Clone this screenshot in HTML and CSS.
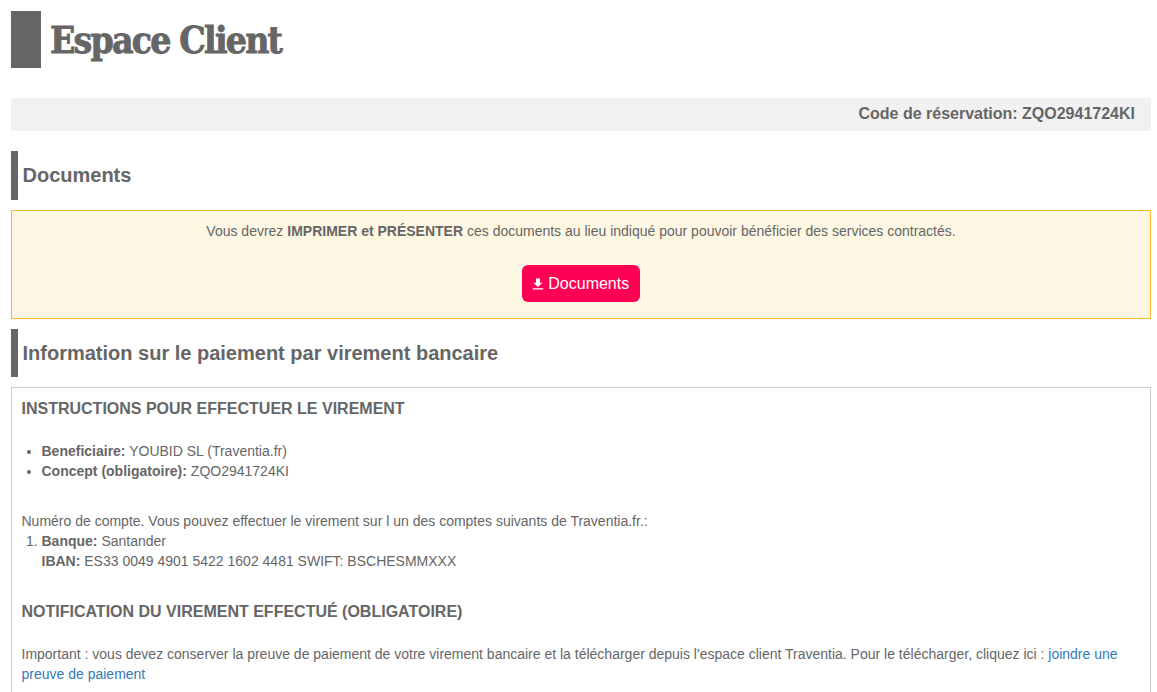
FILE: index.html
```html
<!DOCTYPE html>
<html lang="fr">
<head>
<meta charset="utf-8">
<title>Espace Client</title>
<link rel="stylesheet" href="styles.css">
</head>
<body>
<div class="page">
  <header class="title"><h1>Espace Client</h1></header>
  <div class="codebar">Code de réservation: ZQO2941724KI</div>
  <h2 class="section section-docs">Documents</h2>
  <div class="notice">
    <p>Vous devrez <b>IMPRIMER et PRÉSENTER</b> ces documents au lieu indiqué pour pouvoir bénéficier des services contractés.</p>
    <a class="btn" href="#"><svg class="dl" viewBox="0 0 12 12" width="12" height="12" aria-hidden="true"><path d="M4 0.5h4v4.2h2.6L6 9 1.4 4.7H4z" fill="#fff"/><path d="M0.8 10.2h10.4v1.3H0.8z" fill="#fff"/></svg> Documents</a>
  </div>
  <h2 class="section section-info">Information sur le paiement par virement bancaire</h2>
  <div class="box">
    <h3>INSTRUCTIONS POUR EFFECTUER LE VIREMENT</h3>
    <ul>
      <li><b>Beneficiaire:</b> YOUBID SL (Traventia.fr)</li>
      <li><b>Concept (obligatoire):</b> ZQO2941724KI</li>
    </ul>
    <p class="accounts">Numéro de compte. Vous pouvez effectuer le virement sur l un des comptes suivants de Traventia.fr.:</p>
    <ol>
      <li><b>Banque:</b> Santander<br><b>IBAN:</b> ES33 0049 4901 5422 1602 4481 SWIFT: BSCHESMMXXX</li>
    </ol>
    <h3 class="notif">NOTIFICATION DU VIREMENT EFFECTUÉ (OBLIGATOIRE)</h3>
    <p class="important">Important : vous devez conserver la preuve de paiement de votre virement bancaire et la télécharger depuis l'espace client Traventia. Pour le télécharger, cliquez ici : <a href="#">joindre une preuve de paiement</a></p>
  </div>
</div>
</body>
</html>
```
FILE: styles.css
```css
html, body { margin: 0; padding: 0; overflow: hidden; background: #fff; }
body { font-family: "Liberation Sans", Arial, sans-serif; font-size: 14px; line-height: 20px; color: #666; }
.page { padding: 11px 6px 0 11px; }
.title { border-left: 30px solid #666; height: 57px; display: flex; align-items: center; }
.title h1 { margin: 2px 0 0 9px; font-family: "DejaVu Serif", serif; font-stretch: condensed; font-weight: 700; font-size: 37px; letter-spacing: -1.8px; line-height: 57px; color: #666; -webkit-text-stroke: 0.8px #666; }
.codebar { margin-top: 30px; height: 33px; background: #f1f1f1; text-align: right; padding-right: 16px; font-weight: 700; font-size: 16px; line-height: 31px; }
.section { margin: 0; border-left: 7px solid #666; font-weight: 700; color: #666; padding-left: 4.5px; }
.section-docs { margin-top: 20px; height: 49px; font-size: 20px; line-height: 48px; }
.section-info { margin-top: 10px; height: 48px; font-size: 20px; line-height: 48px; }
.notice { margin-top: 10px; height: 109px; box-sizing: border-box; border: 1px solid #f8b62d; background: #fef7e3; text-align: center; padding-top: 10px; }
.notice p { margin: 0; }
.btn { display: inline-flex; align-items: center; gap: 4px; margin-top: 24px; height: 37px; padding: 0 10.5px 0 10px; background: #ff0055; color: #fff; border-radius: 6px; font-size: 16px; text-decoration: none; }
.dl { display: block; }
.box { margin-top: 10px; border: 1px solid #ccc; padding: 10px 10px 10px 9.5px; }
h3 { margin: 1px 0 0; font-size: 16px; line-height: 20px; font-weight: 700; color: #666; }
ul, ol { margin: 0; padding-left: 20px; }
ul { margin-top: 22px; }
.accounts { margin: 30px 0 0; }
h3.notif { margin-top: 31px; }
.important { margin: 22px 0 0; }
a { color: #337ab7; text-decoration: none; }
.btn { color: #fff; }
```
